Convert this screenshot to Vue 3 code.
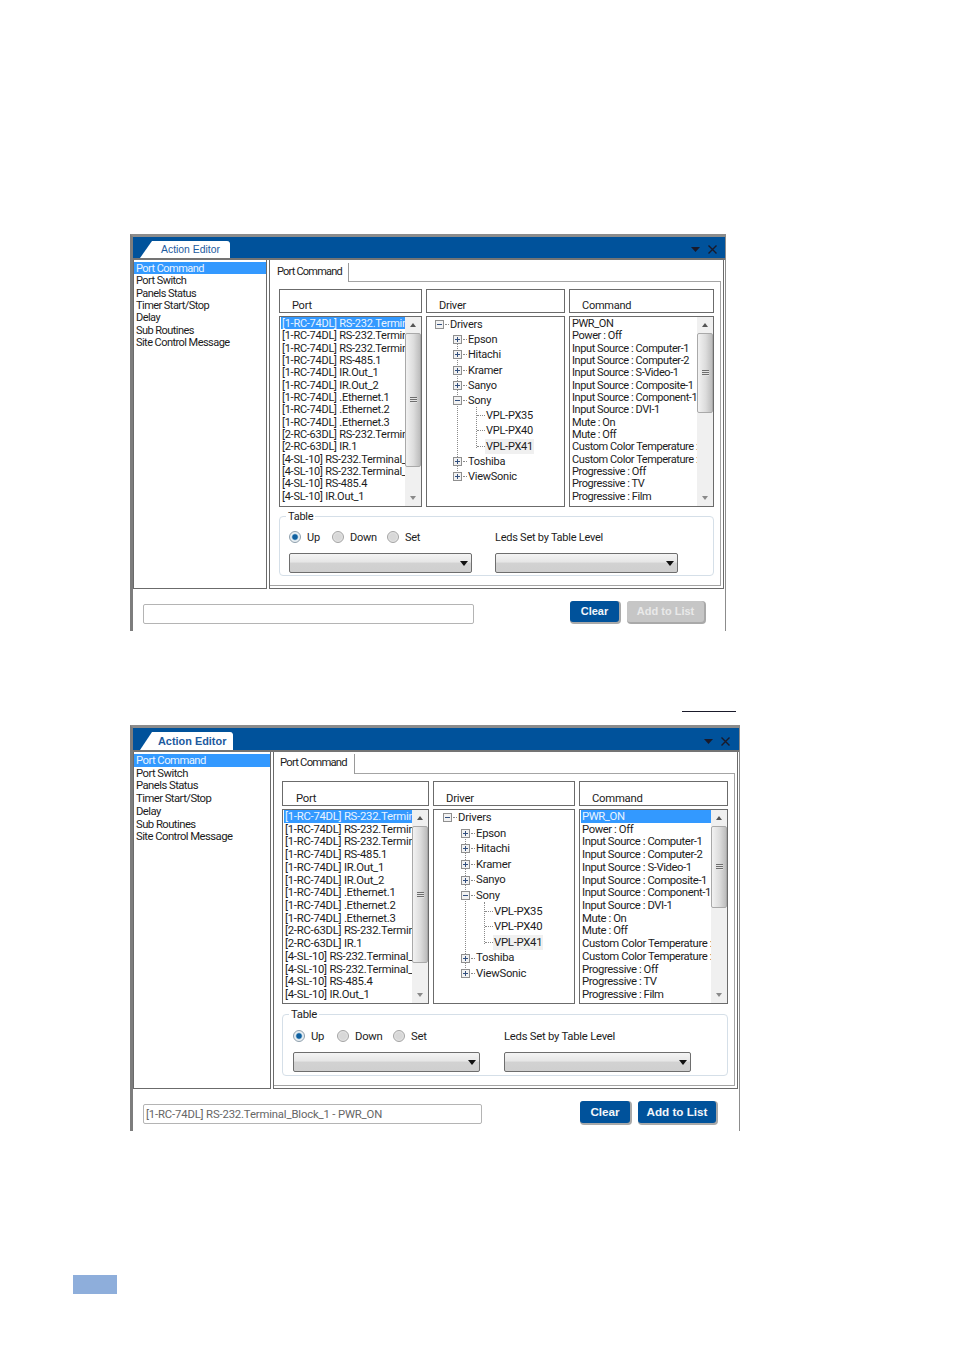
<script setup>
const sideItems = ['Port Command', 'Port Switch', 'Panels Status', 'Timer Start/Stop', 'Delay', 'Sub Routines', 'Site Control Message']
const ports = [
  '[1-RC-74DL] RS-232.Terminal_Block_1', '[1-RC-74DL] RS-232.Terminal_Block_2', '[1-RC-74DL] RS-232.Terminal_Block_3',
  '[1-RC-74DL] RS-485.1', '[1-RC-74DL] IR.Out_1', '[1-RC-74DL] IR.Out_2', '[1-RC-74DL] .Ethernet.1', '[1-RC-74DL] .Ethernet.2',
  '[1-RC-74DL] .Ethernet.3', '[2-RC-63DL] RS-232.Terminal_Block_1', '[2-RC-63DL] IR.1', '[4-SL-10] RS-232.Terminal_Block_1',
  '[4-SL-10] RS-232.Terminal_Block_2', '[4-SL-10] RS-485.4', '[4-SL-10] IR.Out_1'
]
const commands = [
  'PWR_ON', 'Power : Off', 'Input Source : Computer-1', 'Input Source : Computer-2', 'Input Source : S-Video-1',
  'Input Source : Composite-1', 'Input Source : Component-1', 'Input Source : DVI-1', 'Mute : On', 'Mute : Off',
  'Custom Color Temperature : 1', 'Custom Color Temperature : 2', 'Progressive : Off', 'Progressive : TV', 'Progressive : Film'
]
const tree = [
  { t: 'Drivers', l: 0, e: 'minus' }, { t: 'Epson', l: 1, e: 'plus' }, { t: 'Hitachi', l: 1, e: 'plus' },
  { t: 'Kramer', l: 1, e: 'plus' }, { t: 'Sanyo', l: 1, e: 'plus' }, { t: 'Sony', l: 1, e: 'minus' },
  { t: 'VPL-PX35', l: 2 }, { t: 'VPL-PX40', l: 2 }, { t: 'VPL-PX41', l: 2, sel: true },
  { t: 'Toshiba', l: 1, e: 'plus' }, { t: 'ViewSonic', l: 1, e: 'plus' }
]
const windows = [
  { id: 'w1', cmdSelected: false, input: '', addDisabled: true },
  { id: 'w2', cmdSelected: true, input: '[1-RC-74DL] RS-232.Terminal_Block_1 - PWR_ON', addDisabled: false }
]
</script>

<template>
  <div class="page">
    <template v-for="(w, wi) in windows" :key="w.id">
      <div v-if="wi === 1" class="rule"></div>
      <section class="win" :class="w.id">
        <header class="bar">
          <div class="tab-title">Action Editor</div>
          <div class="bar-tools">
            <svg width="9" height="5" viewBox="0 0 9 5"><path d="M0 0h9L4.5 5z" fill="#1a1a2a" /></svg>
            <svg width="9" height="9" viewBox="0 0 9 9"><path d="M.5.5l8 8M8.5.5l-8 8" stroke="#1a1a2a" stroke-width="1.4" fill="none" /></svg>
          </div>
        </header>
        <div class="body">
          <ul class="side">
            <li v-for="(s, i) in sideItems" :key="s" :class="{ on: i === 0 }">{{ s }}</li>
          </ul>
          <div class="panel">
            <div class="ptab">Port Command</div>
            <div class="pane">
              <div class="cols">
                <div class="head hp">Port</div>
                <div class="head hd">Driver</div>
                <div class="head hc">Command</div>

                <div class="list">
                  <ul class="items">
                    <li v-for="(p, i) in ports" :key="i" :class="{ on: i === 0 }">{{ p }}</li>
                  </ul>
                  <div class="sb">
                    <span class="up"></span>
                    <div class="track"><div class="thumb tport"><i></i></div></div>
                    <span class="down"></span>
                  </div>
                </div>

                <div class="list treebox">
                  <span class="vline v1"></span>
                  <span class="vline v2"></span>
                  <div v-for="n in tree" :key="n.t" class="node" :class="'l' + n.l">
                    <svg v-if="n.e" class="exp" width="9" height="9" viewBox="0 0 9 9">
                      <rect x=".5" y=".5" width="8" height="8" fill="#f2f2f2" stroke="#8f8f8f" />
                      <path d="M2 4.5h5" stroke="#33507f" />
                      <path v-if="n.e === 'plus'" d="M4.5 2v5" stroke="#33507f" />
                    </svg>
                    <span class="dots"></span>
                    <span class="ntext" :class="{ sel: n.sel }">{{ n.t }}</span>
                  </div>
                </div>

                <div class="list">
                  <ul class="items cmd">
                    <li v-for="(c, i) in commands" :key="i" :class="{ on: i === 0 && w.cmdSelected }">{{ c }}</li>
                  </ul>
                  <div class="sb">
                    <span class="up"></span>
                    <div class="track"><div class="thumb tcmd"><i></i></div></div>
                    <span class="down"></span>
                  </div>
                </div>
              </div>

              <fieldset class="table">
                <legend>Table</legend>
                <div class="tgrid">
                  <div class="radios">
                    <label class="r rup"><span class="dot on"></span>Up</label>
                    <label class="r rdown"><span class="dot"></span>Down</label>
                    <label class="r"><span class="dot"></span>Set</label>
                  </div>
                  <div class="leds">Leds Set by Table Level</div>
                  <div class="sel-box"><span class="caret"></span></div>
                  <div class="sel-box"><span class="caret"></span></div>
                </div>
              </fieldset>
            </div>
          </div>
        </div>
        <footer class="foot">
          <div class="input">{{ w.input }}</div>
          <div class="btn clear">Clear</div>
          <div class="btn add" :class="{ off: w.addDisabled }">Add to List</div>
        </footer>
      </section>
    </template>
    <div class="pagemark"></div>
  </div>
</template>

<style scoped>
.page { width: 954px; height: 1350px; padding-top: 234px; box-sizing: border-box; display: flex; flex-direction: column; align-items: flex-start; font-family: Roboto, "Liberation Sans", sans-serif; color: #1c1c1c; overflow: hidden; background: #fff; }
ul { list-style: none; margin: 0; padding: 0; }
.rule { width: 54px; height: 1px; background: #1a1a2a; margin: 80px 0 13px 682px; }
.pagemark { width: 44px; height: 19px; background: #8eaedb; margin: 144px 0 0 73px; }

.win { --fs: 11px; --row: 12.35px; --tr: 15.2px; margin-left: 130px; box-sizing: border-box; border-top: 3px solid #8c8c8c; border-left: 3px solid #7d7d7d; border-right: 1px solid #8c8c8c; display: flex; flex-direction: column; font-size: var(--fs); line-height: var(--row); letter-spacing: -0.25px; }
.w1 { width: 596px; height: 397px; }
.w2 { --fs: 11.3px; --row: 12.72px; --tr: 15.6px; width: 610px; height: 406px; }

.bar { display: flex; align-items: flex-end; justify-content: space-between; background: #00529b; border-bottom: 2px solid #747474; height: 23px; box-sizing: border-box; flex: none; }
.w2 .bar { height: 24px; }
.tab-title { margin-left: 7px; width: 90px; height: 17px; background: #fff; box-sizing: border-box; padding: 2px 0 0 21px; color: #1c5a9e; font-family: "Liberation Sans", sans-serif; letter-spacing: 0; font-size: 10.4px; line-height: 14px; white-space: nowrap; clip-path: polygon(0 100%, 12px 0, 99% 0, 100% 8%, 100% 100%); border-radius: 0 3px 0 0; }
.w2 .tab-title { width: 93px; height: 18px; padding-left: 18px; font-weight: 700; font-size: 10.9px; }
.bar-tools { display: flex; gap: 8px; align-items: center; height: 17px; padding-right: 8px; }
.w2 .bar-tools { padding-right: 9px; }

.body { display: flex; gap: 2px; flex: none; height: 329px; }
.w2 .body { height: 337px; }
.side { width: 134px; box-sizing: border-box; border: 1px solid #6b6b6b; border-top: 0; padding-top: 2px; }
.w2 .side { width: 138px; }
.side li { padding-left: 2px; white-space: nowrap; height: var(--row); line-height: calc(var(--row) + 2px); letter-spacing: -0.55px; }
.side li.on, .items li.on { background: #3399ff; color: #eaf4ff; }

.panel { flex: 1; min-width: 0; border: 1px solid #6b6b6b; border-top: 0; display: flex; flex-direction: column; margin-right: 1px; }
.ptab { align-self: flex-start; width: 79px; height: 19px; margin-top: 2px; box-sizing: border-box; border-right: 1px solid #9a9a9a; padding: 2px 0 0 7px; line-height: 14px; letter-spacing: -0.8px; white-space: nowrap; position: relative; top: 1px; background: #fff; z-index: 1; }
.w2 .ptab { width: 81px; height: 20px; margin-top: 1px; padding-left: 6px; }
.pane { flex: 1; margin-right: 2px; margin-bottom: 2px; border: 1px solid #a4a4a4; border-left: 0; padding: 7px 0 0 9px; display: flex; flex-direction: column; }
.w2 .pane { padding-left: 8px; }

.cols { display: grid; grid-template-columns: 143px 139px 145px; grid-template-rows: 24px 191px; column-gap: 4px; row-gap: 3px; }
.w2 .cols { grid-template-columns: 147px 142px 149px; grid-template-rows: 25px 195px; }
.head { border: 1px solid #6b6b6b; box-sizing: border-box; display: flex; align-items: flex-end; padding: 0 0 0 12px; line-height: 12px; }
.w2 .hp { padding-left: 13px; }

.list { position: relative; border: 1px solid #6b6b6b; box-sizing: border-box; display: flex; min-width: 0; overflow: hidden; }
.items { flex: 1; min-width: 0; overflow: hidden; padding: 0 0 0 1px; }
.items.cmd { letter-spacing: -0.42px; }
.items li { white-space: nowrap; overflow: hidden; padding-left: 1px; height: var(--row); line-height: calc(var(--row) + 2px); }
.sb { width: 16px; flex: none; background: #f0f0f0; display: flex; flex-direction: column; }
.up, .down { height: 16px; flex: none; display: flex; align-items: center; justify-content: center; }
.up::before { content: ""; border: 3.5px solid transparent; border-top: 0; border-bottom: 4px solid #555; }
.down::before { content: ""; border: 3.5px solid transparent; border-bottom: 0; border-top: 4px solid #8a8a8a; }
.track { flex: 1; }
.thumb { box-sizing: border-box; border: 1px solid #a9a9a9; border-radius: 2px; background: linear-gradient(90deg, #f2f2f2, #dcdcdc 55%, #bdbdbd); display: flex; align-items: center; justify-content: center; }
.thumb i { width: 7px; height: 6px; background: repeating-linear-gradient(#6e6e6e 0 1px, #e4e4e4 1px 2px); }
.w1 .tport { height: 134px; }
.w1 .tcmd { height: 80px; }
.w2 .tport { height: 137px; }
.w2 .tcmd { height: 82px; }

.treebox { display: block; }
.node { display: flex; align-items: center; height: var(--tr); white-space: nowrap; }
.l0 { padding-left: 8px; }
.l1 { padding-left: 26px; }
.l2 { padding-left: 50px; }
.exp { flex: none; margin-right: 1px; position: relative; z-index: 1; }
.dots { width: 4px; flex: none; border-top: 1px dotted #8a8a8a; }
.l2 .dots { width: 8px; }
.ntext { padding: 0 1px; line-height: var(--tr); }
.ntext.sel { background: #f0f0f0; }
.vline { position: absolute; border-left: 1px dotted #8a8a8a; }
.v1 { left: 30px; top: calc(var(--tr) * 1.5); height: calc(var(--tr) * 9); }
.v2 { left: 49px; top: calc(var(--tr) * 5.9); height: calc(var(--tr) * 2.7); }
.w2 .l0 { padding-left: 9px; }
.w2 .l1 { padding-left: 27px; }
.w2 .l2 { padding-left: 51px; }
.w2 .v1 { left: 31px; }
.w2 .v2 { left: 50px; }

.table { margin: 3px 0 0; width: 435px; height: 66px; box-sizing: border-box; border: 1px solid #d5dfe8; border-radius: 4px; padding: 0 0 0 9px; min-width: 0; }
.w2 .table { margin-top: 4px; width: 446px; height: 68px; padding-left: 10px; }
.table legend { padding: 0 2px; margin-left: -3px; line-height: 12px; position: relative; top: 1px; }
.w2 .table legend { margin-left: -4px; }
.tgrid { display: grid; grid-template-columns: 183px 183px; column-gap: 23px; row-gap: 9px; padding-top: 8px; }
.w2 .tgrid { grid-template-columns: 187px 187px; column-gap: 24px; padding-top: 9px; row-gap: 9px; }
.radios { display: flex; align-items: center; height: 14px; }
.leds { height: 14px; line-height: 16px; white-space: nowrap; }
.r { display: flex; align-items: center; gap: 6px; line-height: 14px; padding-top: 2px; }
.rup { width: 43px; }
.rdown { width: 55px; }
.w2 .rup { width: 44px; }
.w2 .rdown { width: 56px; }
.dot { width: 12px; height: 12px; margin-top: -2px; box-sizing: border-box; border-radius: 50%; border: 1px solid #a3a3a3; background: radial-gradient(circle, #d8d8d8 0 45%, #f4f4f4 100%); flex: none; }
.dot.on { border-color: #8fa0ad; background: radial-gradient(circle, #0f5f9f 0 32%, #6ea6cc 40%, #e8eef2 52%); }
.sel-box { position: relative; height: 20px; box-sizing: border-box; border: 1px solid #6e6e6e; border-radius: 2px; background: linear-gradient(#f4f4f4 0, #e6e6e6 45%, #d2d2d2 50%, #cfcfcf 100%); }
.caret { position: absolute; right: 3px; top: 7px; border: 4px solid transparent; border-bottom: 0; border-top: 5px solid #111; }

.foot { flex: 1; display: flex; align-items: flex-start; padding: 12px 0 0 10px; }
.input { width: 331px; height: 20px; margin-top: 3px; box-sizing: border-box; border: 1px solid #b4b4b4; border-radius: 2px; padding-left: 2px; color: #666; line-height: 20px; letter-spacing: -0.15px; white-space: nowrap; overflow: hidden; }
.btn { height: 21px; box-sizing: border-box; border-radius: 3px; display: flex; align-items: center; justify-content: center; background: #00529b; color: #f2f6fa; font-family: "Liberation Sans", sans-serif; letter-spacing: 0; font-weight: 700; font-size: 11px; box-shadow: 1px 1px 0 1px #a9a9a9; white-space: nowrap; }
.clear { width: 49px; margin-left: 96px; }
.add { width: 77px; margin-left: 8px; }
.add.off { background: #c6c6c6; color: #e9e9e9; }
.w2 .input { width: 339px; }
.w2 .btn { height: 22px; font-size: 11.7px; }
.w2 .clear { width: 50px; margin-left: 98px; }
.w2 .add { width: 78px; margin-left: 8px; }
</style>

<style>
html, body { margin: 0; background: #fff; }
</style>
